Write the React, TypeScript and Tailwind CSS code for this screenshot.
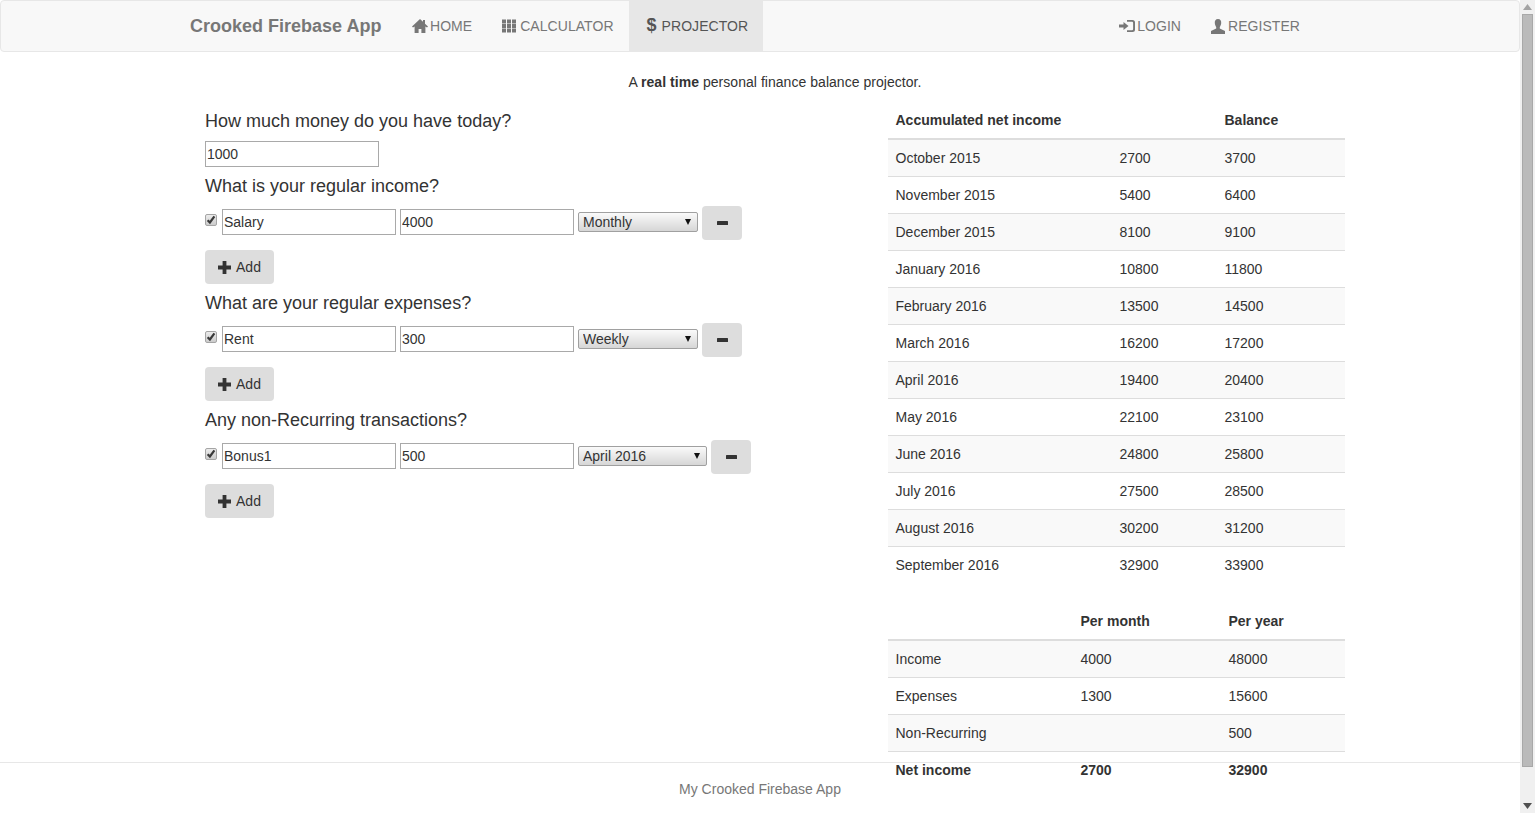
import React from "react";

function HomeIcon() {
  return (
    <svg width="16" height="14" viewBox="0 0 16 14" className="shrink-0" fill="currentColor">
      <path d="M8 0 L11 2.8 V1 H13 V4.7 L16 7.6 L15 8.6 L13.4 7.4 V14 H9.4 V10 H6.6 V14 H2.6 V7.4 L1 8.6 L0 7.6 Z" />
    </svg>
  );
}
function ThIcon() {
  return (
    <svg width="14" height="14" viewBox="0 0 14 14" className="shrink-0" fill="currentColor">
      {[0, 5, 10].map((x) =>
        [0.5, 5, 9.5].map((y) => <rect key={`${x}-${y}`} x={x} y={y} width="4" height="4" />)
      )}
    </svg>
  );
}
function LoginIcon() {
  return (
    <svg width="16" height="14" viewBox="0 0 16 14" className="shrink-0" fill="currentColor">
      <path d="M0 5.5 H4.5 V3 L9.5 7 L4.5 11 V8.5 H0 Z" />
      <path d="M8 1 H13.5 Q16 1 16 3.5 V10.5 Q16 13 13.5 13 H8 V11.2 H13 Q14.1 11.2 14.1 10 V4 Q14.1 2.8 13 2.8 H8 Z" />
    </svg>
  );
}
function UserIcon() {
  return (
    <svg width="14" height="15" viewBox="0 0 14 15" className="shrink-0" fill="currentColor">
      <path d="M7 0 C9.4 0 10.4 1.8 10.2 4 C10.1 5.8 9.4 7.2 8.8 8 V9.6 L14 12 V15 H0 V12 L5.2 9.6 V8 C4.6 7.2 3.9 5.8 3.8 4 C3.6 1.8 4.6 0 7 0 Z" />
    </svg>
  );
}
function PlusIcon() {
  return (
    <svg width="13" height="13" viewBox="0 0 13 13" className="shrink-0" fill="currentColor">
      <path d="M4.6 0 H8.4 V4.6 H13 V8.4 H8.4 V13 H4.6 V8.4 H0 V4.6 H4.6 Z" />
    </svg>
  );
}
function MinusIcon() {
  return (
    <svg width="11" height="4" viewBox="0 0 11 4" className="shrink-0" fill="currentColor">
      <rect width="11" height="4" rx="0.5" />
    </svg>
  );
}
function CheckBox() {
  return (
    <span className="mr-[5px] mt-[8px] block h-[12px] w-[12px] shrink-0 self-start rounded-[2px] border border-[#a5a5a5] bg-[linear-gradient(#ececec,#cccccc)]">
      <svg width="10" height="10" viewBox="0 0 10 10" fill="none" stroke="#3a3a3a" strokeWidth="2.2">
        <path d="M1.6 5.2 L3.9 7.5 L8.4 1.4" />
      </svg>
    </span>
  );
}

function TextBox({ value, w = "w-[174px]" }: { value: string; w?: string }) {
  return (
    <input
      readOnly
      value={value}
      className={`block h-[26px] ${w} border border-[#a9a9a9] bg-white px-[1px] text-[14px] text-[#333] outline-none`}
    />
  );
}

function Select({ value, w }: { value: string; w: string }) {
  return (
    <span className={`relative mt-[6px] block h-[20px] ${w} self-start`}>
      <select
        value={value}
        onChange={() => {}}
        className="block h-[20px] w-full appearance-none rounded-[2px] border border-[#a0a0a0] bg-[linear-gradient(#fafafa,#d6d6d6)] pl-[4px] text-[14px] leading-[18px] text-[#333] outline-none"
      >
        <option>{value}</option>
      </select>
      <svg width="6" height="6" viewBox="0 0 6 6" className="absolute right-[7px] top-[7px]" fill="#111">
        <path d="M0 0 H6 L3 6 Z" />
      </svg>
    </span>
  );
}

function Row({ name, amount, select, selW }: { name: string; amount: string; select: string; selW: string }) {
  return (
    <div className="flex items-start">
      <CheckBox />
      <span className="mt-[3px] block">
        <TextBox value={name} />
      </span>
      <span className="ml-[4px] mt-[3px] block">
        <TextBox value={amount} />
      </span>
      <span className="ml-[4px] block">
        <Select value={select} w={selW} />
      </span>
      <button className="ml-[4px] flex h-[34px] w-[40px] items-center justify-center rounded-[4px] bg-[#dddddd] text-[#333]">
        <MinusIcon />
      </button>
    </div>
  );
}

function AddButton() {
  return (
    <button className="mt-[10px] flex h-[34px] w-[69px] items-center justify-center gap-[5px] rounded-[4px] bg-[#dddddd] text-[14px] text-[#333]">
      <PlusIcon />
      Add
    </button>
  );
}

function Heading({ children }: { children: React.ReactNode }) {
  return <h4 className="mb-[10px] mt-[9px] text-[18px] font-medium leading-[20px] text-[#333]">{children}</h4>;
}

const projection = [
  ["October 2015", "2700", "3700"],
  ["November 2015", "5400", "6400"],
  ["December 2015", "8100", "9100"],
  ["January 2016", "10800", "11800"],
  ["February 2016", "13500", "14500"],
  ["March 2016", "16200", "17200"],
  ["April 2016", "19400", "20400"],
  ["May 2016", "22100", "23100"],
  ["June 2016", "24800", "25800"],
  ["July 2016", "27500", "28500"],
  ["August 2016", "30200", "31200"],
  ["September 2016", "32900", "33900"],
];

const summary = [
  ["Income", "4000", "48000"],
  ["Expenses", "1300", "15600"],
  ["Non-Recurring", "", "500"],
];

function DataTable({
  head,
  rows,
  widths,
  foot,
}: {
  head: string[];
  rows: string[][];
  widths: string[];
  foot?: string[];
}) {
  return (
    <table className="w-[457.5px] table-fixed border-collapse text-[14px] text-[#333]">
      <thead>
        <tr className="border-b-2 border-[#dddddd]">
          {head.map((h, i) => (
            <th key={i} className={`${widths[i]} h-[37px] px-[8px] pb-[1px] text-left font-bold`}>
              {h}
            </th>
          ))}
        </tr>
      </thead>
      <tbody>
        {rows.map((r, i) => (
          <tr key={i} className={`${i % 2 === 0 ? "bg-[#f9f9f9]" : ""} ${i > 0 ? "border-t border-[#dddddd]" : ""}`}>
            {r.map((c, j) => (
              <td key={j} className="h-[37px] px-[8px]">
                {c}
              </td>
            ))}
          </tr>
        ))}
        {foot && (
          <tr className="border-t border-[#dddddd] font-bold">
            {foot.map((c, j) => (
              <td key={j} className="h-[37px] px-[8px]">
                {c}
              </td>
            ))}
          </tr>
        )}
      </tbody>
    </table>
  );
}

function NavLink({ icon, label, active, gap = "gap-[2px]" }: { icon: React.ReactNode; label: string; active?: boolean; gap?: string }) {
  return (
    <a className={`flex h-[50px] items-center ${gap} px-[15px] text-[14px] uppercase tracking-[0.05px] ${active ? "bg-[#e7e7e7] text-[#555]" : "text-[#777]"}`}>
      {icon}
      {label}
    </a>
  );
}

export default function App() {
  return (
    <div className="flex h-[813px] w-full overflow-hidden bg-white font-['Liberation_Sans',Arial,sans-serif] text-[14px] leading-[20px] text-[#333]">
      <div className="relative h-[813px] w-[1520px] shrink-0 overflow-hidden">
        <nav className="h-[52px] rounded-[4px] border border-[#e7e7e7] bg-[#f8f8f8]">
          <div className="mx-auto flex w-[1170px] justify-between pl-[15px] pr-[30px]">
            <div className="flex">
              <a className="flex h-[50px] w-[207px] items-center text-[18px] font-bold text-[#777]">Crooked Firebase App</a>
              <NavLink icon={<HomeIcon />} label="Home" />
              <NavLink icon={<ThIcon />} label="Calculator" gap="gap-[4px]" />
              <NavLink
                active
                gap="gap-[8px]"
                icon={<span className="relative left-[3px] top-[-1px] text-[18px] font-bold leading-none">$</span>}
                label="Projector"
              />
            </div>
            <div className="flex">
              <NavLink icon={<LoginIcon />} label="Login" />
              <NavLink icon={<UserIcon />} label="Register" gap="gap-[3px]" />
            </div>
          </div>
        </nav>

        <div className="mx-auto w-[1170px]">
          <p className="mb-[10px] mt-[20px] pl-[30px] text-center tracking-[0.04px]">
            A <strong>real time</strong> personal finance balance projector.
          </p>
          <div className="flex items-start">
            <div className="w-[712.5px] shrink-0 pl-[30px]">
              <Heading>How much money do you have today?</Heading>
              <TextBox value="1000" />
              <Heading>What is your regular income?</Heading>
              <Row name="Salary" amount="4000" select="Monthly" selW="w-[120px]" />
              <AddButton />
              <Heading>What are your regular expenses?</Heading>
              <Row name="Rent" amount="300" select="Weekly" selW="w-[120px]" />
              <AddButton />
              <Heading>Any non-Recurring transactions?</Heading>
              <Row name="Bonus1" amount="500" select="April 2016" selW="w-[129px]" />
              <AddButton />
            </div>
            <div className="flex w-[457.5px] shrink-0 flex-col gap-[20px]">
              <DataTable
                head={["Accumulated net income", "", "Balance"]}
                rows={projection}
                widths={["w-[224px]", "w-[105px]", "w-[128.5px]"]}
              />
              <DataTable
                head={["", "Per month", "Per year"]}
                rows={summary}
                widths={["w-[185px]", "w-[148px]", "w-[124.5px]"]}
                foot={["Net income", "2700", "32900"]}
              />
            </div>
          </div>
        </div>

        <footer className="absolute bottom-0 left-0 h-[51px] w-[1520px] border-t border-[#e7e7e7] pt-[16px] text-center text-[#777]">
          My Crooked Firebase App
        </footer>
      </div>

      <div className="relative h-[813px] w-[15px] shrink-0 bg-[#f0f0f0]">
        <svg width="9" height="6" viewBox="0 0 9 6" className="absolute left-[3px] top-[4px]" fill="#a3a3a3">
          <path d="M4.5 0 L9 6 H0 Z" />
        </svg>
        <div className="absolute left-[2px] top-[14px] h-[753px] w-[11px] border border-[#a8a8a8] bg-[#bababa]" />
        <svg width="9" height="6" viewBox="0 0 9 6" className="absolute left-[3px] top-[803px]" fill="#505050">
          <path d="M0 0 H9 L4.5 6 Z" />
        </svg>
      </div>
    </div>
  );
}
